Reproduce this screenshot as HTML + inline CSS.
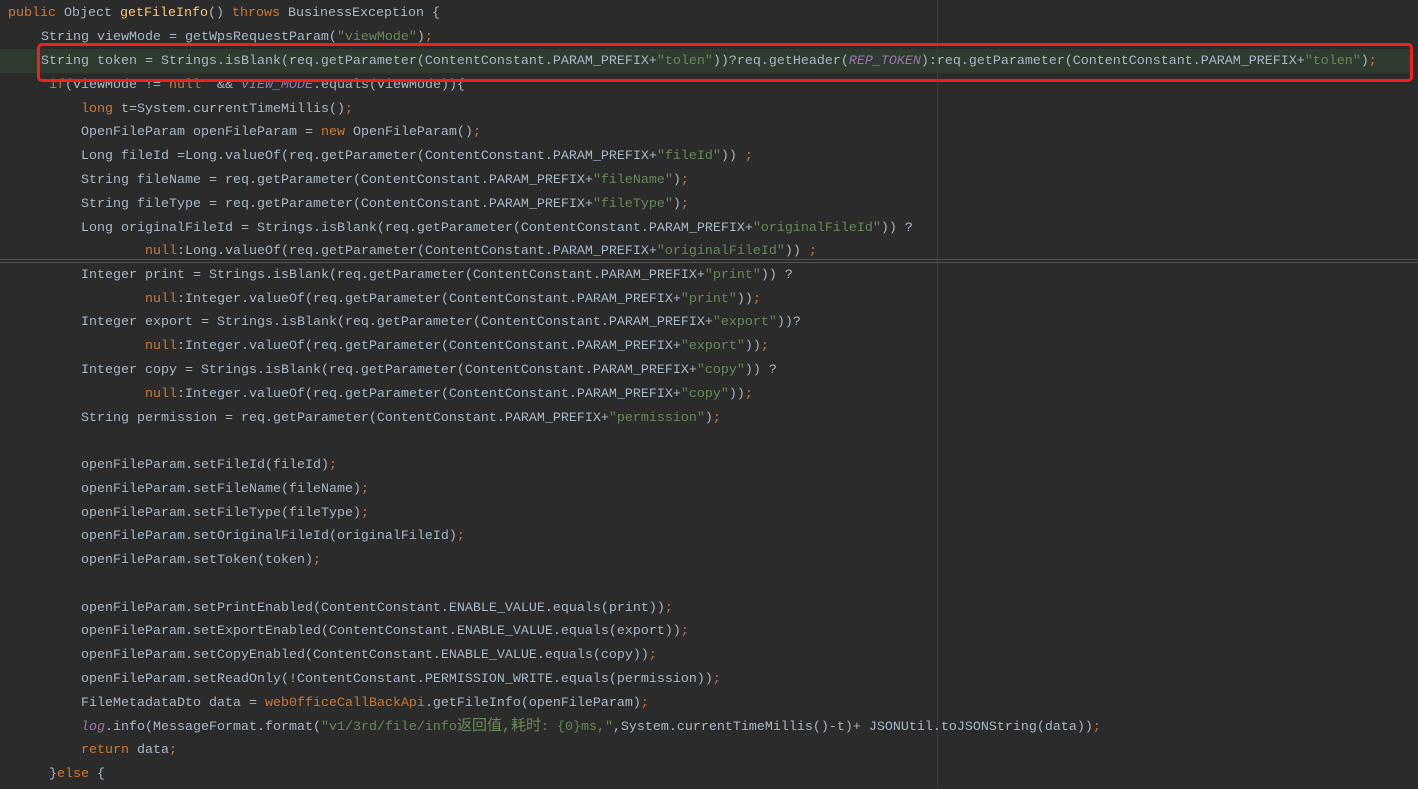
<!DOCTYPE html>
<html><head><meta charset="utf-8"><style>
body{margin:0;width:1418px;height:787px;background:#2b2b2b;overflow:hidden;position:relative;font-family:"Liberation Mono","Noto Sans CJK SC",monospace;font-size:13.33px;color:#a9b7c6}
#t{position:absolute;left:0;right:0;top:2px;height:787px}
.l{position:absolute;height:24px;line-height:24px;white-space:pre;left:0;right:0}
.k{color:#cc7832}.s{color:#6a8759}.m{color:#ffc66d}.f{color:#9876aa;font-style:italic}
.c{font-size:15px}
</style></head><body>
<div style="position:absolute;left:0;right:6px;top:49px;height:24px;background:#2f3b31"></div>
<div style="position:absolute;left:937px;top:0;width:1px;height:787px;background:#3a3a3a"></div>
<div style="position:absolute;left:0;right:0;top:259px;height:1px;background:#505050"></div>
<div style="position:absolute;left:0;right:0;top:262px;height:1px;background:#505050"></div>
<div id="t">
<div class="l" style="top:0;padding-left:8px"><span class="k">public</span> Object <span class="m">getFileInfo</span>() <span class="k">throws</span> BusinessException {</div>
<div class="l" style="top:24px;padding-left:41px">String viewMode = getWpsRequestParam(<span class="s">"viewMode"</span>)<span class="k">;</span></div>
<div class="l" style="top:48px;padding-left:41px">String token = Strings.isBlank(req.getParameter(ContentConstant.PARAM_PREFIX+<span class="s">"tolen"</span>))?req.getHeader(<span class="f">REP_TOKEN</span>):req.getParameter(ContentConstant.PARAM_PREFIX+<span class="s">"tolen"</span>)<span class="k">;</span></div>
<div class="l" style="top:72px;padding-left:49px"><span class="k">if</span>(viewMode != <span class="k">null</span>  &amp;&amp; <span class="f">VIEW_MODE</span>.equals(viewMode)){</div>
<div class="l" style="top:96px;padding-left:81px"><span class="k">long</span> t=System.currentTimeMillis()<span class="k">;</span></div>
<div class="l" style="top:119px;padding-left:81px">OpenFileParam openFileParam = <span class="k">new</span> OpenFileParam()<span class="k">;</span></div>
<div class="l" style="top:143px;padding-left:81px">Long fileId =Long.valueOf(req.getParameter(ContentConstant.PARAM_PREFIX+<span class="s">"fileId"</span>)) <span class="k">;</span></div>
<div class="l" style="top:167px;padding-left:81px">String fileName = req.getParameter(ContentConstant.PARAM_PREFIX+<span class="s">"fileName"</span>)<span class="k">;</span></div>
<div class="l" style="top:191px;padding-left:81px">String fileType = req.getParameter(ContentConstant.PARAM_PREFIX+<span class="s">"fileType"</span>)<span class="k">;</span></div>
<div class="l" style="top:215px;padding-left:81px">Long originalFileId = Strings.isBlank(req.getParameter(ContentConstant.PARAM_PREFIX+<span class="s">"originalFileId"</span>)) ?</div>
<div class="l" style="top:238px;padding-left:145px"><span class="k">null</span>:Long.valueOf(req.getParameter(ContentConstant.PARAM_PREFIX+<span class="s">"originalFileId"</span>)) <span class="k">;</span></div>
<div class="l" style="top:262px;padding-left:81px">Integer print = Strings.isBlank(req.getParameter(ContentConstant.PARAM_PREFIX+<span class="s">"print"</span>)) ?</div>
<div class="l" style="top:286px;padding-left:145px"><span class="k">null</span>:Integer.valueOf(req.getParameter(ContentConstant.PARAM_PREFIX+<span class="s">"print"</span>))<span class="k">;</span></div>
<div class="l" style="top:309px;padding-left:81px">Integer export = Strings.isBlank(req.getParameter(ContentConstant.PARAM_PREFIX+<span class="s">"export"</span>))?</div>
<div class="l" style="top:333px;padding-left:145px"><span class="k">null</span>:Integer.valueOf(req.getParameter(ContentConstant.PARAM_PREFIX+<span class="s">"export"</span>))<span class="k">;</span></div>
<div class="l" style="top:357px;padding-left:81px">Integer copy = Strings.isBlank(req.getParameter(ContentConstant.PARAM_PREFIX+<span class="s">"copy"</span>)) ?</div>
<div class="l" style="top:381px;padding-left:145px"><span class="k">null</span>:Integer.valueOf(req.getParameter(ContentConstant.PARAM_PREFIX+<span class="s">"copy"</span>))<span class="k">;</span></div>
<div class="l" style="top:405px;padding-left:81px">String permission = req.getParameter(ContentConstant.PARAM_PREFIX+<span class="s">"permission"</span>)<span class="k">;</span></div>
<div class="l" style="top:452px;padding-left:81px">openFileParam.setFileId(fileId)<span class="k">;</span></div>
<div class="l" style="top:476px;padding-left:81px">openFileParam.setFileName(fileName)<span class="k">;</span></div>
<div class="l" style="top:500px;padding-left:81px">openFileParam.setFileType(fileType)<span class="k">;</span></div>
<div class="l" style="top:523px;padding-left:81px">openFileParam.setOriginalFileId(originalFileId)<span class="k">;</span></div>
<div class="l" style="top:547px;padding-left:81px">openFileParam.setToken(token)<span class="k">;</span></div>
<div class="l" style="top:595px;padding-left:81px">openFileParam.setPrintEnabled(ContentConstant.ENABLE_VALUE.equals(print))<span class="k">;</span></div>
<div class="l" style="top:618px;padding-left:81px">openFileParam.setExportEnabled(ContentConstant.ENABLE_VALUE.equals(export))<span class="k">;</span></div>
<div class="l" style="top:642px;padding-left:81px">openFileParam.setCopyEnabled(ContentConstant.ENABLE_VALUE.equals(copy))<span class="k">;</span></div>
<div class="l" style="top:666px;padding-left:81px">openFileParam.setReadOnly(!ContentConstant.PERMISSION_WRITE.equals(permission))<span class="k">;</span></div>
<div class="l" style="top:690px;padding-left:81px">FileMetadataDto data = <span style="color:#cc7832">web0fficeCallBackApi</span>.getFileInfo(openFileParam)<span class="k">;</span></div>
<div class="l" style="top:713px;padding-left:81px"><span class="f">log</span>.info(MessageFormat.format(<span class="s">"v1/3rd/file/info<span class="c">返回值,耗时</span>: {0}ms,"</span>,System.currentTimeMillis()-t)+ JSONUtil.toJSONString(data))<span class="k">;</span></div>
<div class="l" style="top:737px;padding-left:81px"><span class="k">return</span> data<span class="k">;</span></div>
<div class="l" style="top:761px;padding-left:49px">}<span class="k">else</span> {</div>
</div>
<div style="position:absolute;left:37px;top:43px;width:1370px;height:33px;border:3px solid #f0201c;border-radius:5px"></div>
</body></html>
